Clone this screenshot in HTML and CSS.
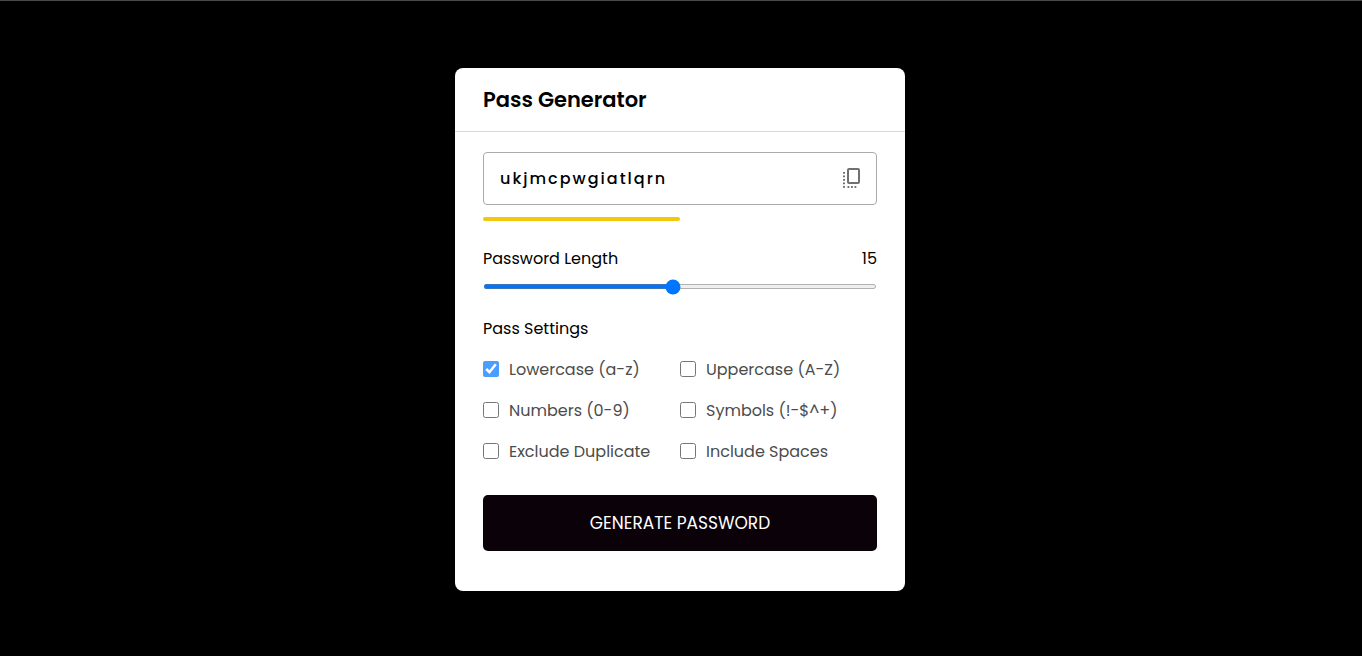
FILE: index.html
```html
<!DOCTYPE html>
<html lang="en">
<head>
  <meta charset="utf-8">
  <title>Pass Generator</title>
  <link rel="stylesheet" href="styles.css">
</head>
<body>
  <main class="container">
    <h1 class="title">Pass Generator</h1>
    <div class="wrapper">
      <div class="input-box">
        <input class="password" type="text" value="ukjmcpwgiatlqrn" aria-label="Generated password" readonly>
        <button class="copy" type="button" aria-label="Copy password">
          <svg width="18" height="21" viewBox="0 0 18 21" fill="none" stroke="currentColor" stroke-width="2">
            <rect x="5" y="1" width="11" height="14" rx="1"/>
            <path d="M1 4V20" stroke-dasharray="1.8 1.7"/>
            <path d="M4.5 19H14" stroke-dasharray="1.8 1.7"/>
          </svg>
        </button>
      </div>
      <div class="strength"><div class="strength-fill"></div></div>
      <div class="length-row">
        <label for="length">Password Length</label>
        <output for="length">15</output>
      </div>
      <input class="slider" id="length" type="range" min="1" max="30" value="15">
      <fieldset class="settings">
        <legend class="settings-title">Pass Settings</legend>
        <div class="options">
          <label class="option"><input type="checkbox" checked>Lowercase (a-z)</label>
          <label class="option"><input type="checkbox">Uppercase (A-Z)</label>
          <label class="option"><input type="checkbox">Numbers (0-9)</label>
          <label class="option"><input type="checkbox">Symbols (!-$^+)</label>
          <label class="option"><input type="checkbox">Exclude Duplicate</label>
          <label class="option"><input type="checkbox">Include Spaces</label>
        </div>
      </fieldset>
      <button class="generate" type="button">GENERATE PASSWORD</button>
    </div>
  </main>
</body>
</html>
```
FILE: styles.css
```css
* {
  box-sizing: border-box;
  margin: 0;
  padding: 0;
  font-family: Poppins, Inter, sans-serif;
}

body {
  display: flex;
  align-items: center;
  justify-content: center;
  min-height: 100vh;
  padding: 2px 2px 0 0;
  border-top: 1px solid #4a4a4a;
  background: #000;
  color: #000;
  font-size: 16px;
}

.container {
  width: 100%;
  max-width: 450px;
  border-radius: 8px;
  background: #fff;
}

.title {
  padding: 16px 28px;
  border-bottom: 1px solid #d4dbe5;
  font-size: 21px;
  font-weight: 600;
  line-height: 31px;
}

.wrapper {
  padding: 20px 28px 40px;
}

.input-box {
  display: flex;
  align-items: center;
  border: 1px solid #aaa;
  border-radius: 4px;
  padding: 0 15px 0 16px;
}

.password {
  flex: 1;
  min-width: 0;
  height: 51px;
  border: 0;
  outline: 0;
  background: none;
  font-size: 16px;
  font-weight: 500;
  letter-spacing: 2px;
}

.copy {
  display: flex;
  border: 0;
  background: none;
  color: #707070;
}

.strength {
  height: 4px;
  margin: 12px 0 24px;
}

.strength-fill {
  width: 50%;
  height: 100%;
  border-radius: 4px;
  background: #f1c80b;
}

.length-row {
  display: flex;
  justify-content: space-between;
  line-height: 27px;
}

.slider {
  display: block;
  width: 100%;
  height: 5px;
  margin: 12px 0 26px;
}

.settings {
  border: 0;
}

.settings-title {
  line-height: 27px;
}

.options {
  display: grid;
  grid-template-columns: 1fr 1fr;
  row-gap: 14px;
  margin: 14px 0 30px;
}

.option {
  display: flex;
  align-items: flex-start;
  gap: 10px;
  color: #4c4c4c;
  line-height: 27px;
}

.option input {
  width: 16px;
  height: 16px;
  margin-top: 5px;
}

.option input:checked {
  opacity: 0.7;
}

.generate {
  width: 100%;
  height: 56px;
  border: 0;
  border-radius: 5px;
  background: #0b0108;
  color: #fff;
  font-size: 17px;
  font-weight: 400;
}
```
